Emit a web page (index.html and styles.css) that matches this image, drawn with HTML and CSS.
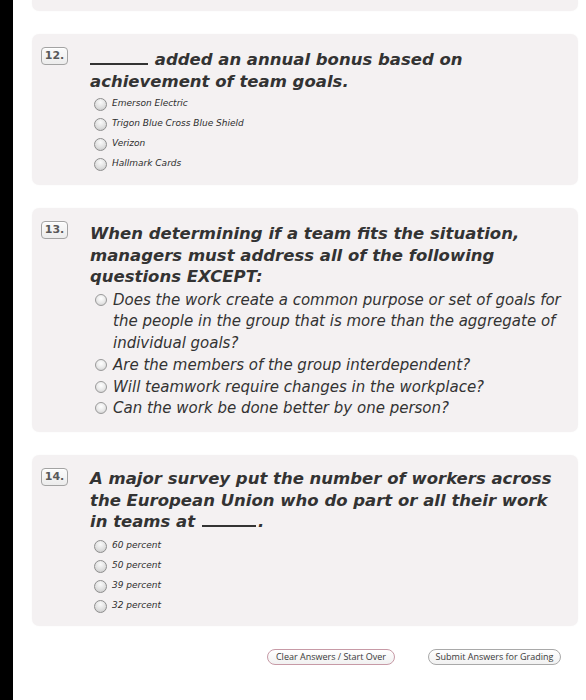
FILE: index.html
```html
<!DOCTYPE html>
<html>
<head>
<meta charset="utf-8">
<link rel="stylesheet" href="styles.css">
</head>
<body>
<div class="page">
  <div class="sidebar"></div>
  <div class="main">
    <div class="card card-top"></div>

    <div class="card q12">
      <div class="badge">12.</div>
      <div class="qbody">
        <div class="qtext"><span class="blank lead"></span> added an annual bonus based on achievement of team goals.</div>
        <ul class="opts small">
          <li><span class="radio"></span>Emerson Electric</li>
          <li><span class="radio"></span>Trigon Blue Cross Blue Shield</li>
          <li><span class="radio"></span>Verizon</li>
          <li><span class="radio"></span>Hallmark Cards</li>
        </ul>
      </div>
    </div>

    <div class="card q13">
      <div class="badge">13.</div>
      <div class="qbody">
        <div class="qtext">When determining if a team fits the situation, managers must address all of the following questions EXCEPT:</div>
        <ul class="opts large">
          <li><span class="radio"></span><span class="otext">Does the work create a common purpose or set of goals for the people in the group that is more than the aggregate of individual goals?</span></li>
          <li><span class="radio"></span><span class="otext">Are the members of the group interdependent?</span></li>
          <li><span class="radio"></span><span class="otext">Will teamwork require changes in the workplace?</span></li>
          <li><span class="radio"></span><span class="otext">Can the work be done better by one person?</span></li>
        </ul>
      </div>
    </div>

    <div class="card q14">
      <div class="badge">14.</div>
      <div class="qbody">
        <div class="qtext">A major survey put the number of workers across the European Union who do part or all their work in teams at <span class="blank tail"></span><span class="dot">.</span></div>
        <ul class="opts small">
          <li><span class="radio"></span>60 percent</li>
          <li><span class="radio"></span>50 percent</li>
          <li><span class="radio"></span>39 percent</li>
          <li><span class="radio"></span>32 percent</li>
        </ul>
      </div>
    </div>

    <div class="buttons">
      <button class="btn btn-clear">Clear Answers / Start Over</button>
      <button class="btn btn-submit">Submit Answers for Grading</button>
    </div>
  </div>
</div>
</body>
</html>
```

FILE: styles.css
```css
html, body {
  margin: 0;
  padding: 0;
  background: #fff;
}
body {
  font-family: "DejaVu Sans", Verdana, sans-serif;
  color: #333;
}
.page {
  display: flex;
  min-height: 700px;
}
.sidebar {
  width: 13px;
  background: #000;
  flex: none;
}
.main {
  padding-left: 19px;
  width: 546px;
}
.card {
  background: #f4f1f2;
  border-radius: 7px;
  display: flex;
  margin-bottom: 23px;
  padding: 13px 10px 0 9px;
  box-shadow: 0 0 2px rgba(0,0,0,0.03);
}
.card-top {
  height: 11px;
  padding: 0;
  border-radius: 0 0 7px 7px;
}
.q12 { height: 138px; }
.q13 { height: 211px; }
.q14 { height: 158px; }

.badge {
  flex: none;
  width: 25px;
  height: 16px;
  border: 1px solid #a3a3a3;
  border-radius: 4px;
  background: linear-gradient(#fbfbfb, #ececec);
  font-size: 11px;
  font-weight: bold;
  color: #595959;
  text-align: center;
  line-height: 16px;
  font-family: "DejaVu Sans", sans-serif;
  box-shadow: inset 0 1px 1px #fff;
}
.qbody {
  margin-left: 22px;
  flex: 1;
}
.qtext {
  font-size: 16.5px;
  font-weight: bold;
  font-style: italic;
  line-height: 21.5px;
  color: #333;
  margin-top: 2px;
}
.q14 .qtext {
  margin-top: 0;
}
.blank {
  display: inline-block;
  border-bottom: 2px solid #333;
  vertical-align: baseline;
  height: 0;
}
.blank.lead {
  width: 58px;
  margin-right: 1px;
}
.blank.tail {
  width: 54px;
  margin-left: 1px;
}
.dot {
  margin-left: 2px;
}
.opts {
  list-style: none;
  margin: 0;
  padding: 0;
}
.opts li {
  display: flex;
  align-items: flex-start;
}
.opts.small {
  margin-top: 1px;
}
.q14 .opts.small {
  margin-top: 2px;
}
.opts.small li {
  font-size: 9px;
  font-style: italic;
  height: 20px;
  align-items: center;
  padding-left: 4px;
  color: #2e2e2e;
}
.opts.small .radio {
  width: 11px;
  height: 11px;
  border: 1px solid #8e8e8e;
  border-radius: 50%;
  background: radial-gradient(circle at 50% 30%, #fafafa 0%, #e0e0e0 55%, #c4c4c4 100%);
  margin-right: 5px;
  flex: none;
  margin-top: 3px;
}
.opts.large {
  margin-top: 2px;
}
.opts.large li {
  font-size: 15px;
  font-style: italic;
  line-height: 21.8px;
  padding-left: 5px;
  color: #333;
}
.opts.large .radio {
  width: 10px;
  height: 10px;
  border: 1px solid #9a9a9a;
  border-radius: 50%;
  background: radial-gradient(circle at 50% 35%, #ffffff 0%, #e8e8e8 55%, #c8c8c8 100%);
  margin-right: 6px;
  margin-top: 4px;
  flex: none;
}
.otext {
  flex: 1;
}
.buttons {
  display: flex;
  justify-content: flex-end;
  gap: 33px;
  padding-right: 17px;
  margin-top: 3px;
}
.btn {
  font-family: "Open Sans", "Liberation Sans", sans-serif;
  font-size: 9px;
  color: #3a3a3a;
  background: linear-gradient(#ffffff, #f1f1f1);
  border-radius: 8px;
  padding: 1px 6px 2px;
  height: 16px;
  line-height: 12px;
  cursor: pointer;
}
.btn-clear {
  border: 1px solid #c79aa6;
  width: 128px;
}
.btn-submit {
  border: 1px solid #a9a9a9;
  width: 133px;
}
```
